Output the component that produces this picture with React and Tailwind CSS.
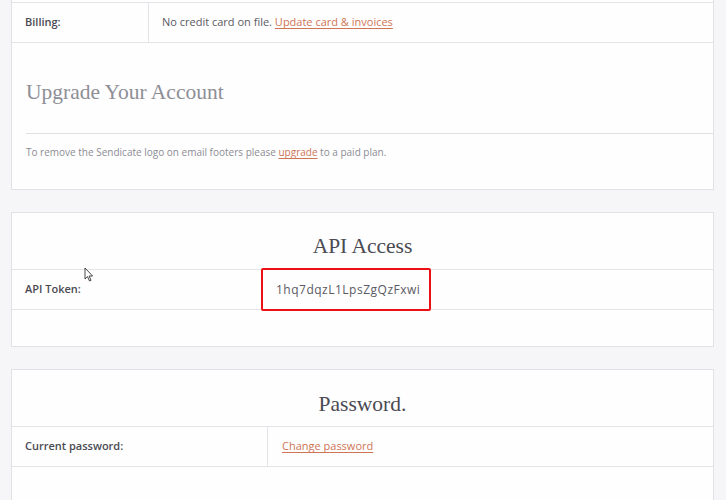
import React from 'react';

const sans = { fontFamily: '"Open Sans", "Noto Sans", sans-serif' };
const serif = { fontFamily: '"Liberation Serif", "DejaVu Serif", serif' };

function Cursor() {
  return (
    <svg className="absolute left-[84px] top-[267px]" width="10" height="15" viewBox="0 0 10 15">
      <path d="M1 1 L1 12 L3.5 9.6 L5.5 14 L7 13.3 L5.1 9 L8.6 9 Z" fill="#fff" stroke="#333" strokeWidth="0.9" strokeLinejoin="round" />
    </svg>
  );
}

export default function App() {
  return (
    <div className="relative h-[500px] w-[726px] overflow-hidden bg-[#f6f6f8]" style={sans}>
      <div className="w-[703px] ml-[11px]">
        {/* billing + upgrade card */}
        <div className="bg-[#fefefe] border-x border-b border-[#e2e2e6] pt-[2px]">
          <div className="flex h-[41px] border-y border-[#e4e4e8] text-[11px]">
            <div className="w-[137px] border-r border-[#e4e4e8] flex items-center pl-[13px] font-semibold text-[#4a4a52]">
              Billing:
            </div>
            <div className="flex items-center pl-[13px] text-[#5a5a62]">
              No credit card on file.&nbsp;
              <a className="text-[#cf7455] underline underline-offset-2">Update card &amp; invoices</a>
            </div>
          </div>
          <div className="pl-[14px]">
            <h2 className="h-[90px] pt-[8px] flex items-center text-[21.5px] text-[#8e8e96]" style={serif}>
              Upgrade Your Account
            </h2>
            <div className="border-t border-[#e0e0e4] h-[56px] pt-[11px] text-[10px] text-[#8c8c94]">
              To remove the Sendicate logo on email footers please{' '}
              <a className="text-[#cf7455] underline underline-offset-2">upgrade</a> to a paid plan.
            </div>
          </div>
        </div>

        {/* API access card */}
        <div className="mt-[22px] bg-[#fefefe] border border-[#e2e2e6] h-[135px]">
          <h2 className="h-[56px] pt-[11px] flex items-center justify-center text-[21.5px] text-[#4a4a52]" style={serif}>
            API Access
          </h2>
          <div className="flex h-[41px] border-y border-[#e4e4e8] text-[11px]">
            <div className="w-[249px] flex items-center pl-[13px] font-semibold text-[#4a4a52]">API Token:</div>
            <div className="-my-[2px] w-[170px] h-[43px] border-2 border-[#ee0f14] rounded-[2px] flex items-center pl-[13px] text-[12px] tracking-[0.5px] text-[#5a5a62]">
              1hq7dqzL1LpsZgQzFxwi
            </div>
          </div>
        </div>

        {/* password card */}
        <div className="mt-[22px] bg-[#fefefe] border-x border-t border-[#e2e2e6] h-[140px]">
          <h2 className="h-[56px] pt-[12px] flex items-center justify-center text-[21.5px] text-[#4a4a52]" style={serif}>
            Password.
          </h2>
          <div className="flex h-[41px] border-y border-[#e4e4e8] text-[11px]">
            <div className="w-[256px] border-r border-[#e4e4e8] flex items-center pl-[13px] font-semibold text-[#4a4a52]">
              Current password:
            </div>
            <div className="flex items-center pl-[14px]">
              <a className="text-[#cf7455] underline underline-offset-2">Change password</a>
            </div>
          </div>
        </div>
      </div>
      <Cursor />
    </div>
  );
}
